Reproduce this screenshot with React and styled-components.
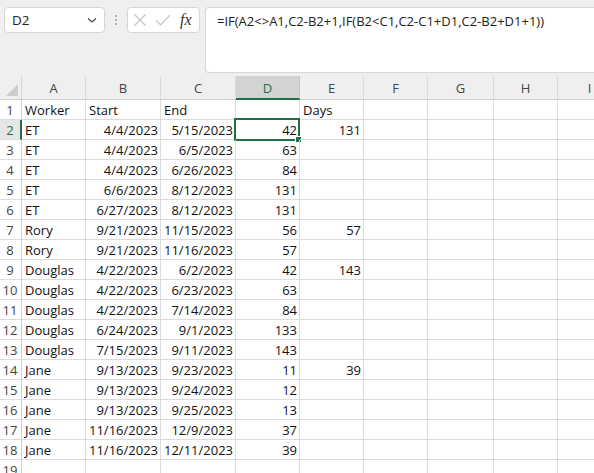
import React from "react";
import styled, { createGlobalStyle } from "styled-components";

const GREEN = "#1e7145";
const GRID = "#dcdcdc";

const Global = createGlobalStyle`
  html, body { margin: 0; padding: 0; background: #efefef; overflow: hidden; }
  body { width: 594px; height: 473px; font-family: "Open Sans", "Noto Sans", sans-serif; }
`;

const Page = styled.div`
  width: 594px;
  height: 473px;
  overflow: hidden;
  display: flex;
  flex-direction: column;
  background: #efefef;
`;

const TopBar = styled.div`
  height: 76px;
  display: flex;
  align-items: flex-start;
  padding: 7px 0 0 4px;
  box-sizing: border-box;
  flex-shrink: 0;
`;

const NameBox = styled.div`
  width: 101px;
  height: 26px;
  box-sizing: border-box;
  background: #fff;
  border: 1px solid #d6d6d6;
  border-radius: 4px;
  display: flex;
  align-items: center;
  justify-content: space-between;
  padding: 0 6px 0 7px;
  font-size: 13.5px;
  color: #222;
`;

const Dots = styled.div`
  width: 22px;
  height: 26px;
  display: flex;
  flex-direction: column;
  align-items: center;
  justify-content: center;
  gap: 2px;
  & > span { width: 2px; height: 2px; background: #9a9a9a; border-radius: 1px; }
`;

const FxBox = styled.div`
  width: 73px;
  height: 26px;
  box-sizing: border-box;
  background: #fff;
  border: 1px solid #d6d6d6;
  border-radius: 4px;
  display: flex;
  align-items: center;
  padding: 0 4px 0 5px;
  gap: 8px;
`;

const FxLabel = styled.span`
  font-family: "Liberation Serif", "DejaVu Serif", serif;
  font-style: italic;
  font-size: 16px;
  color: #333;
  margin-left: 1px;
`;

const FormulaBox = styled.div`
  margin-left: 5px;
  flex: 1;
  height: 66px;
  box-sizing: border-box;
  background: #fff;
  border: 1px solid #d6d6d6;
  border-right: none;
  border-radius: 4px 0 0 4px;
  padding: 4px 0 0 11px;
  font-size: 13px;
  color: #222;
  white-space: nowrap;
`;

const Sheet = styled.div`
  display: grid;
  grid-template-columns: 22px 64px 75px 75px 64px 64px 64px 66px 64px 64px;
  grid-auto-rows: 20px;
  grid-template-rows: 24px;
  background: #fff;
  font-size: 13px;
  color: #111;
`;

const Corner = styled.div`
  background: #efefef;
  border-right: 1px solid #d6d6d6;
  border-bottom: 1px solid #cfcfcf;
  box-sizing: border-box;
  display: flex;
  align-items: flex-end;
  justify-content: flex-end;
  padding: 0 3px 3px 0;
`;

const ColHead = styled.div`
  background: ${p => (p.$active ? "#d3d3d3" : "#efefef")};
  border-right: 1px solid ${p => (p.$active ? "#c4c4c4" : "#dadada")};
  border-bottom: ${p => (p.$active ? `2px solid ${GREEN}` : "1px solid #cfcfcf")};
  box-sizing: border-box;
  display: flex;
  align-items: flex-end;
  justify-content: center;
  padding-bottom: ${p => (p.$active ? "1px" : "2px")};
  color: ${p => (p.$active ? GREEN : "#444")};
  font-size: 13px;
`;

const RowHead = styled.div`
  background: ${p => (p.$active ? "#e6e6e6" : "#fff")};
  border-right: ${p => (p.$active ? `2px solid ${GREEN}` : "1px solid #cfcfcf")};
  border-bottom: 1px solid ${GRID};
  box-sizing: border-box;
  display: flex;
  align-items: flex-end;
  justify-content: center;
  color: ${p => (p.$active ? GREEN : "#444")};
  font-size: 13px;
  line-height: 18px;
  padding-right: ${p => (p.$active ? "0" : "1px")};
`;

const Cell = styled.div`
  position: relative;
  border-right: 1px solid ${GRID};
  border-bottom: 1px solid ${GRID};
  box-sizing: border-box;
  display: flex;
  align-items: flex-end;
  justify-content: ${p => (p.$num ? "flex-end" : "flex-start")};
  padding: 0 2px 0 3px;
  line-height: 18px;
  white-space: nowrap;
`;

const Selection = styled.div`
  position: absolute;
  left: -2px;
  top: -2px;
  right: -1px;
  bottom: -2px;
  border: 2px solid ${GREEN};
  pointer-events: none;
  &::after {
    content: "";
    position: absolute;
    right: -4px;
    bottom: -4px;
    width: 5px;
    height: 5px;
    background: ${GREEN};
    border: 1px solid #fff;
  }
`;

const cols = ["A", "B", "C", "D", "E", "F", "G", "H", "I"];

const data = [
  ["Worker", "Start", "End", "", "Days"],
  ["ET", "4/4/2023", "5/15/2023", "42", "131"],
  ["ET", "4/4/2023", "6/5/2023", "63", ""],
  ["ET", "4/4/2023", "6/26/2023", "84", ""],
  ["ET", "6/6/2023", "8/12/2023", "131", ""],
  ["ET", "6/27/2023", "8/12/2023", "131", ""],
  ["Rory", "9/21/2023", "11/15/2023", "56", "57"],
  ["Rory", "9/21/2023", "11/16/2023", "57", ""],
  ["Douglas", "4/22/2023", "6/2/2023", "42", "143"],
  ["Douglas", "4/22/2023", "6/23/2023", "63", ""],
  ["Douglas", "4/22/2023", "7/14/2023", "84", ""],
  ["Douglas", "6/24/2023", "9/1/2023", "133", ""],
  ["Douglas", "7/15/2023", "9/11/2023", "143", ""],
  ["Jane", "9/13/2023", "9/23/2023", "11", "39"],
  ["Jane", "9/13/2023", "9/24/2023", "12", ""],
  ["Jane", "9/13/2023", "9/25/2023", "13", ""],
  ["Jane", "11/16/2023", "12/9/2023", "37", ""],
  ["Jane", "11/16/2023", "12/11/2023", "39", ""],
  ["", "", "", "", ""],
];

const Chevron = () => (
  <svg width="12" height="12" viewBox="0 0 12 12">
    <path d="M2 4.5 L6 8 L10 4.5" fill="none" stroke="#444" strokeWidth="1.2" />
  </svg>
);

const XIcon = () => (
  <svg width="14" height="14" viewBox="0 0 14 14">
    <path d="M1.5 1.5 L12.5 12.5 M12.5 1.5 L1.5 12.5" stroke="#c4c4c4" strokeWidth="1.1" fill="none" />
  </svg>
);

const CheckIcon = () => (
  <svg width="16" height="14" viewBox="0 0 16 14">
    <path d="M1 7.5 L5.5 12 L15 2" stroke="#c4c4c4" strokeWidth="1.1" fill="none" />
  </svg>
);

const Triangle = () => (
  <svg width="12" height="12" viewBox="0 0 12 12">
    <path d="M12 0 L12 12 L0 12 Z" fill="#cdcdcd" />
  </svg>
);

const isNum = (r, c) => r > 0 && c > 0;

export default function App() {
  return (
    <Page>
      <Global />
      <TopBar>
        <NameBox>
          <span>D2</span>
          <Chevron />
        </NameBox>
        <Dots>
          <span />
          <span />
          <span />
        </Dots>
        <FxBox>
          <XIcon />
          <CheckIcon />
          <FxLabel>fx</FxLabel>
        </FxBox>
        <FormulaBox>=IF(A2&lt;&gt;A1,C2-B2+1,IF(B2&lt;C1,C2-C1+D1,C2-B2+D1+1))</FormulaBox>
      </TopBar>
      <Sheet>
        <Corner>
          <Triangle />
        </Corner>
        {cols.map(c => (
          <ColHead key={c} $active={c === "D"}>
            {c}
          </ColHead>
        ))}
        {data.map((row, r) => (
          <React.Fragment key={r}>
            <RowHead $active={r === 1}>{r + 1}</RowHead>
            {cols.map((c, ci) => {
              const v = row[ci] || "";
              return (
                <Cell key={c} $num={isNum(r, ci)}>
                  {v}
                  {r === 1 && c === "D" && <Selection />}
                </Cell>
              );
            })}
          </React.Fragment>
        ))}
      </Sheet>
    </Page>
  );
}
